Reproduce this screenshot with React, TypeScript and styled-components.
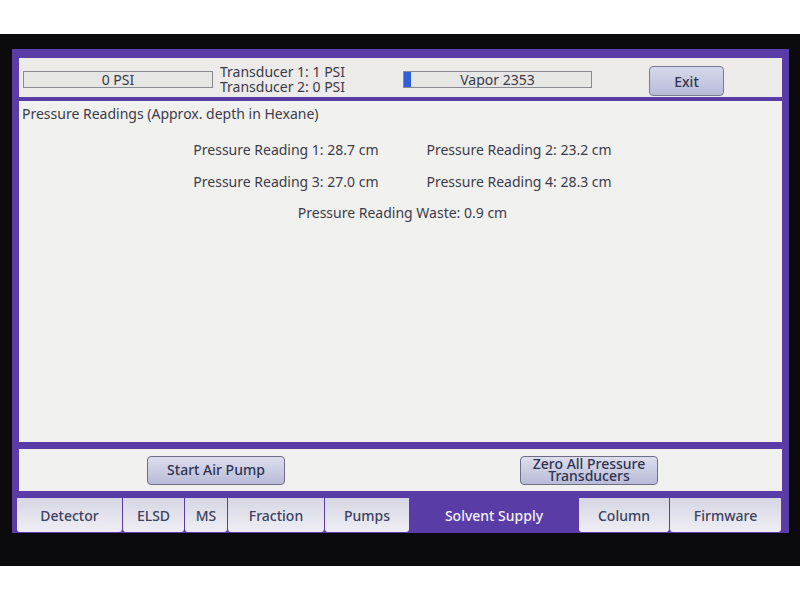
import React from "react";
import styled, { createGlobalStyle } from "styled-components";

const GlobalStyle = createGlobalStyle`
  html, body {
    margin: 0;
    padding: 0;
    background: #ffffff;
  }
  body {
    font-family: "Noto Sans", "DejaVu Sans", sans-serif;
  }
`;

const Page = styled.div`
  width: 800px;
  height: 600px;
  display: flex;
  flex-direction: column;
  background: #ffffff;
  overflow: hidden;
`;

const Bezel = styled.div`
  margin-top: 34px;
  height: 532px;
  background: #0b0a0c;
  padding: 15px 11px 0 12px;
  box-sizing: border-box;
`;

const Frame = styled.div`
  background: #5a3ca6;
  padding: 9px 7px 0 7px;
  display: flex;
  flex-direction: column;
  height: 484px;
  box-sizing: border-box;
`;

const TopPanel = styled.div`
  height: 39px;
  background: #ecebe9;
  display: flex;
  align-items: center;
  padding: 4px 0 0 4px;
  box-sizing: border-box;
  color: #3a3a48;
  font-size: 14px;
`;

const MeterBox = styled.div<{ $w: number }>`
  position: relative;
  width: ${(p) => p.$w}px;
  height: 17px;
  box-sizing: border-box;
  border: 1px solid #8a8a92;
  background: #e6e6e4;
  display: flex;
  align-items: center;
  justify-content: center;
  font-size: 14px;
  line-height: 15px;
  color: #3a3a48;
  overflow: hidden;
`;

const MeterFill = styled.div`
  position: absolute;
  left: 0;
  top: 0;
  bottom: 0;
  background: #2f5ed8;
`;

const TransducerBlock = styled.div`
  width: 183px;
  margin-left: 7px;
  display: flex;
  flex-direction: column;
  line-height: 15px;
  font-size: 14px;
  margin-top: -2px;
`;

const ExitButton = styled.button`
  margin-left: 57px;
  width: 75px;
  height: 30px;
  margin-top: 3px;
  border: 1px solid #7a7a90;
  border-radius: 4px;
  background: linear-gradient(#d6d8ea, #b9bcd8);
  color: #30344e;
  font-family: inherit;
  font-size: 14px;
  font-weight: 500;
  padding: 0;
`;

const ContentPanel = styled.div`
  margin-top: 4px;
  height: 341px;
  background: #f0f0ee;
  padding: 4px 3px;
  box-sizing: border-box;
  color: #3c3c4a;
  font-size: 14px;
`;

const Title = styled.div`
  line-height: 18px;
`;

const Readings = styled.div`
  margin-top: 17px;
  display: grid;
  grid-template-columns: auto auto;
  justify-content: center;
  column-gap: 48px;
  row-gap: 13px;
  line-height: 19px;
  padding-left: 4px;
`;

const Waste = styled.div`
  grid-column: 1 / span 2;
  text-align: center;
  margin-top: -1px;
`;

const ButtonPanel = styled.div`
  margin-top: 7px;
  height: 42px;
  background: #f0f0ee;
  display: flex;
  align-items: center;
  gap: 235px;
  padding-left: 128px;
  box-sizing: border-box;
`;

const ActionButton = styled.button`
  width: 138px;
  height: 29px;
  border: 1px solid #6e6e86;
  border-radius: 4px;
  background: linear-gradient(#dcdded, #b9bcd8);
  color: #2f3350;
  font-family: inherit;
  font-size: 14px;
  font-weight: 500;
  line-height: 12.5px;
  padding: 0;
`;

const Tabs = styled.div`
  margin: 7px 0 0 -2px;
  display: flex;
  gap: 1px;
  height: 34px;
`;

const Tab = styled.div<{ $w: number; $active?: boolean }>`
  width: ${(p) => p.$w}px;
  flex: none;
  display: flex;
  align-items: center;
  justify-content: center;
  border-radius: 0 0 3px 3px;
  font-size: 14px;
  font-weight: 500;
  color: ${(p) => (p.$active ? "#f4f2fb" : "#3c4160")};
  background: ${(p) =>
    p.$active ? "#5a3ca6" : "linear-gradient(#d6d6e4, #efeef4)"};
`;

const tabs: { label: string; w: number; active?: boolean }[] = [
  { label: "Detector", w: 105 },
  { label: "ELSD", w: 61 },
  { label: "MS", w: 42 },
  { label: "Fraction", w: 96 },
  { label: "Pumps", w: 84 },
  { label: "Solvent Supply", w: 168, active: true },
  { label: "Column", w: 90 },
  { label: "Firmware", w: 111 },
];

export default function App() {
  return (
    <>
      <GlobalStyle />
      <Page>
        <Bezel>
          <Frame>
            <TopPanel>
              <MeterBox $w={190}>0 PSI</MeterBox>
              <TransducerBlock>
                <span>Transducer 1: 1 PSI</span>
                <span>Transducer 2: 0 PSI</span>
              </TransducerBlock>
              <MeterBox $w={189}>
                <MeterFill style={{ width: "7px" }} />
                Vapor 2353
              </MeterBox>
              <ExitButton>Exit</ExitButton>
            </TopPanel>

            <ContentPanel>
              <Title>Pressure Readings (Approx. depth in Hexane)</Title>
              <Readings>
                <div>Pressure Reading 1: 28.7 cm</div>
                <div>Pressure Reading 2: 23.2 cm</div>
                <div>Pressure Reading 3: 27.0 cm</div>
                <div>Pressure Reading 4: 28.3 cm</div>
                <Waste>Pressure Reading Waste: 0.9 cm</Waste>
              </Readings>
            </ContentPanel>

            <ButtonPanel>
              <ActionButton>Start Air Pump</ActionButton>
              <ActionButton>
                Zero All Pressure
                <br />
                Transducers
              </ActionButton>
            </ButtonPanel>

            <Tabs>
              {tabs.map((t) => (
                <Tab key={t.label} $w={t.w} $active={t.active}>
                  {t.label}
                </Tab>
              ))}
            </Tabs>
          </Frame>
        </Bezel>
      </Page>
    </>
  );
}
